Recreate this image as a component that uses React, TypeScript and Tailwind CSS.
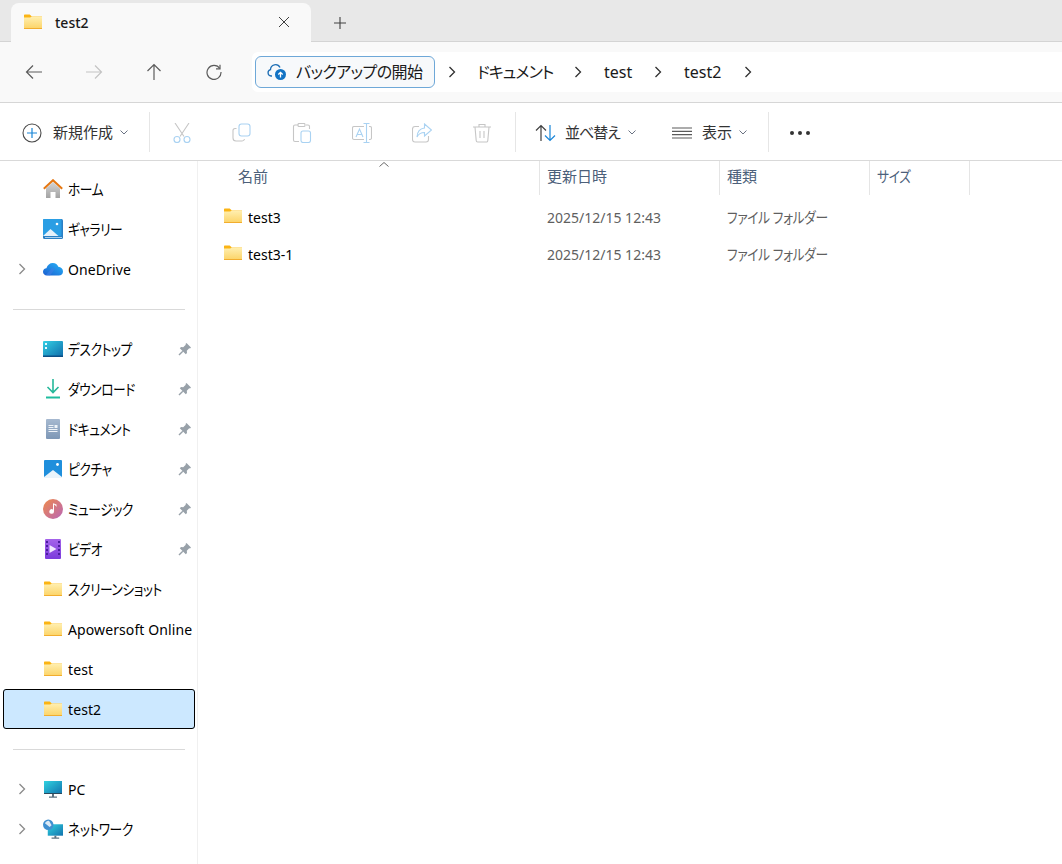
import { ReactNode } from 'react';

function Folder() {
  return (
    <svg width="20" height="16" viewBox="0 0 20 16" className="shrink-0">
      <defs>
        <linearGradient id="folderBody" x1="0" y1="0" x2="0" y2="1">
          <stop offset="0" stopColor="#ffefb0" />
          <stop offset="1" stopColor="#fcd468" />
        </linearGradient>
      </defs>
      <path d="M1 1.2q0-.7.7-.7h5l2.2 2H19v2H1z" fill="#fbb414" />
      <path d="M1 3.6h6.2l1.6-1H19v12H1z" fill="url(#folderBody)" />
      <path d="M1 14h18v1H1z" fill="#f2ad2e" />
    </svg>
  );
}

function Chevron({ className = '' }: { className?: string }) {
  return (
    <svg width="8" height="12" viewBox="0 0 8 12" className={className}>
      <path d="M1.5 1l5 5-5 5" fill="none" stroke="currentColor" strokeWidth="1.3" />
    </svg>
  );
}

function Caret() {
  return (
    <svg width="8" height="5" viewBox="0 0 8 5" className="text-gray-500">
      <path d="M.5.5L4 4 7.5.5" fill="none" stroke="currentColor" strokeWidth="1" />
    </svg>
  );
}

function Pin() {
  return (
    <svg width="14" height="14" viewBox="0 0 14 14">
      <path d="M8.500 1L13 5.500l-1 1-.8-.3-2.400 2.600.2 2.200-1.200 1.200-6-6L3 5l2.200.2 2.600-2.400-.3-.8z" fill="#98a1a9" />
      <path d="M4.800 9.200L1 13" stroke="#98a1a9" strokeWidth="1.400" />
    </svg>
  );
}

const Home = (
  <svg width="20" height="20" viewBox="0 0 20 20">
    <defs>
      <linearGradient id="homeWall" x1="0" y1="0" x2="0" y2="1">
        <stop offset="0" stopColor="#d4d4d4" />
        <stop offset="1" stopColor="#a3a3a3" />
      </linearGradient>
    </defs>
    <path d="M3 9.500L10 3l7 6.500V19h-4.500v-6h-5v6H3z" fill="url(#homeWall)" />
    <path d="M.8 9.800L10 1.200l9.200 8.600" fill="none" stroke="#e57712" strokeWidth="2" />
  </svg>
);

const Gallery = (
  <svg width="20" height="20" viewBox="0 0 20 20">
    <rect x="0" y="0" width="20" height="20" rx="1.500" fill="#2b7fc4" />
    <rect x="0" y="0" width="18.500" height="17" rx="1" fill="#2a9ee4" />
    <circle cx="14" cy="5" r="1.300" fill="#ffffff" />
    <path d="M0 17l7.500-7 8 7z" fill="#e6f1fa" />
    <path d="M2 18h17v1H2z" fill="#a9cfec" />
  </svg>
);

const OneDrive = (
  <svg width="20" height="14" viewBox="0 0 20 14">
    <defs>
      <linearGradient id="oneDrive" x1="0" y1="1" x2="1" y2="0">
        <stop offset="0" stopColor="#1a5fd0" />
        <stop offset="1" stopColor="#27b4f8" />
      </linearGradient>
    </defs>
    <path d="M4 13.500C1.500 13.500 0 11.800 0 9.800 0 7.800 1.500 6.400 3.400 6.200 4.500 3 6.800 1 9.800 1c2.800 0 4.700 1.600 5.500 3.800 2.700.1 4.700 2.100 4.700 4.600 0 2.400-1.800 4.100-4.200 4.100z" fill="url(#oneDrive)" />
    <path d="M3 13L9 6l3 1-5 6.500z" fill="#3f7fe6" opacity="0.6" />
  </svg>
);

const Desktop = (
  <svg width="20" height="16" viewBox="0 0 20 16">
    <defs>
      <linearGradient id="desk" x1="0" y1="0" x2="1" y2="1">
        <stop offset="0" stopColor="#34d0e4" />
        <stop offset="1" stopColor="#0f6cab" />
      </linearGradient>
    </defs>
    <rect width="20" height="16" rx="1" fill="url(#desk)" />
    <rect x="2" y="2" width="2" height="2" fill="#e8fbff" />
    <rect x="2" y="6" width="2" height="2" fill="#e8fbff" />
    <rect x="0" y="14.500" width="20" height="1.500" fill="#0c4f86" />
  </svg>
);

const Download = (
  <svg width="16" height="20" viewBox="0 0 16 20">
    <path d="M8 0v13M2.500 8L8 13.500 13.500 8" fill="none" stroke="#26b89a" strokeWidth="1.600" />
    <path d="M1 18.500h14" stroke="#1fbd9f" strokeWidth="2" />
  </svg>
);

const Documents = (
  <svg width="14" height="20" viewBox="0 0 14 20">
    <defs>
      <linearGradient id="docBody" x1="0" y1="0" x2="0" y2="1">
        <stop offset="0" stopColor="#a6b9d0" />
        <stop offset="1" stopColor="#7d97b6" />
      </linearGradient>
    </defs>
    <rect width="14" height="20" rx="1" fill="url(#docBody)" />
    <path d="M2.500 6.500h5M2.500 8.500h5M2.500 10.500h9M2.500 12.500h9" stroke="#eef3f8" strokeWidth="1" />
    <rect x="8.500" y="6" width="3" height="3" fill="#eef3f8" />
  </svg>
);

const Pictures = (
  <svg width="18" height="18" viewBox="0 0 18 18">
    <rect width="18" height="18" rx="1" fill="#1f8fdc" />
    <circle cx="13.500" cy="4.500" r="1.400" fill="#ffffff" />
    <path d="M0 18v-1l9-7 9 7v1z" fill="#eaf4fb" />
  </svg>
);

const Music = (
  <svg width="20" height="20" viewBox="0 0 20 20">
    <defs>
      <linearGradient id="musicBg" x1="0" y1="0" x2="1" y2="1">
        <stop offset="0" stopColor="#ef8a4a" />
        <stop offset="1" stopColor="#b966b8" />
      </linearGradient>
    </defs>
    <circle cx="10" cy="10" r="10" fill="url(#musicBg)" />
    <path d="M10 4.500h1v8a2.300 2.300 0 1 1-1-1.900z" fill="#ffffff" />
    <path d="M10.500 4.500c.5 1.800 2.500 1.800 3 3.500v-2.500c-1-.5-2-.7-2.500-1z" fill="#ffffff" />
  </svg>
);

const Video = (
  <svg width="16" height="20" viewBox="0 0 16 20">
    <defs>
      <linearGradient id="videoBg" x1="0" y1="0" x2="0" y2="1">
        <stop offset="0" stopColor="#a463ea" />
        <stop offset="1" stopColor="#7b3bdc" />
      </linearGradient>
    </defs>
    <rect width="16" height="20" rx="1" fill="url(#videoBg)" />
    <path d="M4.500 6v8l7-4z" fill="#f0e6ff" />
    <path d="M1 2h2v2H1zM1 6h2v2H1zM1 10h2v2H1zM1 14h2v2H1zM13 2h2v2h-2zM13 6h2v2h-2zM13 10h2v2h-2zM13 14h2v2h-2z" fill="#4b1e9e" />
  </svg>
);

const Pc = (
  <svg width="18" height="17" viewBox="0 0 18 17">
    <defs>
      <linearGradient id="pcScreen" x1="0" y1="0" x2="1" y2="1">
        <stop offset="0" stopColor="#30d2e0" />
        <stop offset="1" stopColor="#1273ae" />
      </linearGradient>
    </defs>
    <rect width="18" height="13" fill="url(#pcScreen)" />
    <path d="M0 12.500h18" stroke="#2b4a5e" strokeWidth="1" />
    <path d="M8 13h2v2.500H8zM5 15.500h8v1.300H5z" fill="#5c7180" />
  </svg>
);

const Network = (
  <svg width="21" height="21" viewBox="0 0 21 21">
    <defs>
      <linearGradient id="netScreen" x1="0" y1="0" x2="1" y2="1">
        <stop offset="0" stopColor="#30d2e0" />
        <stop offset="1" stopColor="#1273ae" />
      </linearGradient>
    </defs>
    <rect x="5" y="5" width="16" height="12" fill="url(#netScreen)" />
    <path d="M12 17h2v2h-2zM9 19h8v1.300H9z" fill="#5c7180" />
    <circle cx="5.500" cy="5.500" r="5.500" fill="#3f8fd0" />
    <path d="M2 4c1-2 3-3 4.500-2.500L9 6 7 8z" fill="#dbe9f5" />
  </svg>
);

function Icon({ name }: { name: 'cut' | 'copy' | 'paste' | 'rename' | 'share' }) {
  const gray = '#c6c6c6';
  const blue = '#a9d2f2';
  if (name === 'cut')
    return (
      <svg width="20" height="20" viewBox="0 0 20 20" fill="none" strokeWidth="1.100">
        <path d="M3 0l9 13.500M17 0L8 13.500" stroke={gray} />
        <circle cx="5" cy="16.500" r="3" stroke={blue} />
        <circle cx="15" cy="16.500" r="3" stroke={blue} />
      </svg>
    );
  if (name === 'copy')
    return (
      <svg width="20" height="20" viewBox="0 0 20 20" fill="none" strokeWidth="1.100">
        <path d="M4.500 5.500H3a2 2 0 0 0-2 2V15a3 3 0 0 0 3 3h6a2.500 2.500 0 0 0 2.500-2" stroke={gray} />
        <rect x="7" y="1" width="11" height="12" rx="2.500" stroke={blue} />
      </svg>
    );
  if (name === 'paste')
    return (
      <svg width="20" height="20" viewBox="0 0 20 20" fill="none" strokeWidth="1.100">
        <path d="M6 2H3a1.500 1.500 0 0 0-1.500 1.500V17A1.500 1.500 0 0 0 3 18.500h4M14 2h2a1.500 1.500 0 0 1 1.500 1.500V6" stroke={gray} />
        <rect x="6" y="0.500" width="7" height="3" rx="1" stroke={gray} />
        <rect x="9" y="8" width="9.500" height="11.500" rx="2" stroke={blue} />
      </svg>
    );
  if (name === 'rename')
    return (
      <svg width="20" height="20" viewBox="0 0 20 20" fill="none" strokeWidth="1.100">
        <path d="M12 3.500H2a1.500 1.500 0 0 0-1.500 1.500v10A1.500 1.500 0 0 0 2 16.500h10M17 3.500h1A1.500 1.500 0 0 1 19.500 5v10a1.500 1.500 0 0 1-1.500 1.500h-1" stroke={gray} />
        <path d="M11.500.5h6M14.500.5v19M11.500 19.500h6" stroke={blue} />
        <path d="M4 14L7.500 6l3.500 8M5.200 11.500h4.600" stroke={blue} />
      </svg>
    );
  return (
    <svg width="20" height="20" viewBox="0 0 20 20" fill="none" strokeWidth="1.100">
      <path d="M7 3.500H3A2.500 2.500 0 0 0 .5 6v10.500A2.500 2.500 0 0 0 3 19h11a2.500 2.500 0 0 0 2.500-2.500V13" stroke={gray} />
      <path d="M12.500 1l7 6-7 6V9.500C9 9.500 6.500 11 5 14c.3-5 3-8.500 7.500-9z" stroke={blue} />
    </svg>
  );
}

function Sep() {
  return <div className="w-px h-10 bg-[#e6e6e6] shrink-0" />;
}

function NavRow({ icon, label, pin, expand, active, kana }: { icon: ReactNode; label: string; pin?: boolean; expand?: boolean; active?: boolean; kana?: boolean }) {
  return (
    <div className={active ? 'h-10 ml-[3px] w-[192px] outline outline-1 -outline-offset-1 outline-black rounded-[3px] bg-[#cce8ff] flex items-center' : 'h-10 ml-[3px] w-[192px] flex items-center'}>
      <div className="w-[15px] ml-[15px] flex items-center text-[#8a8a8a]">{expand && <Chevron />}</div>
      <div className="w-5 ml-[10px] flex items-center justify-center shrink-0">{icon}</div>
      <span className={kana ? "ml-[5px] text-[15px] tracking-[-0.5px] origin-left scale-x-[.85] [font-feature-settings:'palt'] text-black whitespace-nowrap" : 'ml-[5px] text-[14px] tracking-[0.1px] text-black whitespace-nowrap'}>{label}</span>
      {pin && <span className="ml-auto mr-[3px] flex"><Pin /></span>}
    </div>
  );
}

function NavDivider() {
  return (
    <div className="h-10 flex items-center pl-[13px]">
      <div className="w-[172px] h-px bg-[#d9d9d9]" />
    </div>
  );
}

function HeaderCell({ label, width, pad, kana }: { label: string; width: string; pad: string; kana?: boolean }) {
  return (
    <div className={`${width} ${pad} h-[34px] shrink-0 border-r border-[#e5e5e5] flex items-center pb-1 text-[15px] text-[#4c607a]`}>
      <span className={kana ? "[font-feature-settings:'palt'] tracking-[-0.4px] origin-left scale-x-[.85]" : ''}>{label}</span>
    </div>
  );
}

function FileRow({ name }: { name: string }) {
  return (
    <div className="h-[37px] flex items-center text-[14px]">
      <div className="w-[342px] shrink-0 pl-[26px] flex items-center gap-[5px]">
        <span className="flex -mt-[3px] -ml-px"><Folder /></span>
        <span className="text-black">{name}</span>
      </div>
      <div className="w-[180px] shrink-0 pl-[7px] text-[#5f5f5f]">2025/12/15 12:43</div>
      <div className="w-[150px] shrink-0 pl-[7px] text-[#5f5f5f] text-[15px]">
        <div className="tracking-[-0.4px] origin-left scale-x-[.85] [font-feature-settings:'palt'] whitespace-nowrap">ファイル フォルダー</div>
      </div>
    </div>
  );
}

export default function App() {
  return (
    <div className="w-[1062px] h-[864px] overflow-hidden flex flex-col bg-white font-['Noto_Sans','Noto_Sans_CJK_JP',sans-serif]">
      {/* tabs */}
      <div className="h-[42px] shrink-0 bg-[#e8e8e8] flex items-end pl-[11px] border-b border-[#d4d4d4]">
        <div className="w-[300px] h-[39px] -mb-px bg-[#f9f9f9] rounded-t-lg flex items-center pl-[12px] pb-[1px]">
          <Folder />
          <span className="ml-[12px] text-[14px] font-medium text-[#1a1a1a]">test2</span>
          <svg width="12" height="12" viewBox="0 0 12 12" className="ml-auto mr-[21px] text-[#404040]">
            <path d="M1 1l10 10M11 1L1 11" stroke="currentColor" strokeWidth="1" />
          </svg>
        </div>
        <div className="h-[39px] flex items-center pt-[2px] ml-[23px] text-[#404040]">
          <svg width="12" height="12" viewBox="0 0 12 12">
            <path d="M6 0v12M0 6h12" stroke="currentColor" strokeWidth="1.100" />
          </svg>
        </div>
      </div>

      {/* address bar */}
      <div className="h-[61px] shrink-0 bg-[#f9f9f9] border-b border-[#d6d6d6] flex items-center pl-[4px]">
        <div className="w-[60px] flex justify-center text-[#5c5c5c]">
          <svg width="18" height="16" viewBox="0 0 18 16" fill="none" stroke="currentColor" strokeWidth="1.200">
            <path d="M17 8H1.500M8 1.500L1.500 8 8 14.500" />
          </svg>
        </div>
        <div className="w-[60px] flex justify-center text-[#c4c4c4]">
          <svg width="18" height="16" viewBox="0 0 18 16" fill="none" stroke="currentColor" strokeWidth="1.200">
            <path d="M1 8h15.500M10 1.500L16.500 8 10 14.500" />
          </svg>
        </div>
        <div className="w-[60px] flex justify-center text-[#5c5c5c]">
          <svg width="16" height="18" viewBox="0 0 16 18" fill="none" stroke="currentColor" strokeWidth="1.200">
            <path d="M8 17V1.500M1.500 8L8 1.500 14.500 8" />
          </svg>
        </div>
        <div className="w-[60px] flex justify-center text-[#5c5c5c]">
          <svg width="16" height="16" viewBox="0 0 16 16" fill="none" stroke="currentColor" strokeWidth="1.200">
            <path d="M13.800 4.500A7 7 0 1 0 15 8" />
            <path d="M14 .8v4h-4" />
          </svg>
        </div>
        <div className="ml-[8px] flex-1 h-10 bg-white rounded-l-md flex items-center pl-[3px] text-[#1a1a1a]">
          <div className="w-[180px] h-8 shrink-0 rounded-md border border-[#6ea8d8] bg-[#f7f9fb] flex items-center pl-[11px]">
            <svg width="20" height="18" viewBox="0 0 20 18" fill="none">
              <path d="M5 13H4a3.200 3.200 0 0 1-.5-6.300A5 5 0 0 1 13 4.500" stroke="#1f6fb5" strokeWidth="1.300" />
              <circle cx="13.500" cy="11.500" r="5.500" fill="#1273c4" />
              <path d="M13.500 14.500v-5M11.300 11.500l2.200-2.200 2.200 2.200" stroke="#ffffff" strokeWidth="1.300" />
            </svg>
            <span className="ml-[9px] text-[16px] tracking-[-0.6px] [font-feature-settings:'palt'] whitespace-nowrap">バックアップの開始</span>
          </div>
          <Chevron className="ml-[13px] text-[#303030]" />
          <span className="ml-[21px] w-[76px] text-[16px] tracking-[-0.9px] [font-feature-settings:'palt'] whitespace-nowrap">ドキュメント</span>
          <Chevron className="ml-[21px] text-[#303030]" />
          <span className="ml-[22px] w-[29px] text-[16px]">test</span>
          <Chevron className="ml-[21px] text-[#303030]" />
          <span className="ml-[22px] w-[38px] text-[16px]">test2</span>
          <Chevron className="ml-[22px] text-[#303030]" />
        </div>
      </div>

      {/* toolbar */}
      <div className="h-[58px] shrink-0 bg-white border-b border-[#d9d9d9] flex items-center">
        <div className="w-[149px] shrink-0 pl-[22px] flex items-center pt-[2px]">
          <svg width="20" height="20" viewBox="0 0 20 20" fill="none">
            <circle cx="10" cy="10" r="9" stroke="#4a4a4a" strokeWidth="1.100" />
            <path d="M10 5v10M5 10h10" stroke="#1a86d8" strokeWidth="1.200" />
          </svg>
          <span className="ml-[11px] w-[60px] text-[15px] text-[#333333] whitespace-nowrap">新規作成</span>
          <span className="ml-[7px] flex"><Caret /></span>
        </div>
        <Sep />
        <div className="w-[2px] shrink-0" />
        {(['cut', 'copy', 'paste', 'rename', 'share'] as const).map((n) => (
          <div key={n} className="w-[60px] shrink-0 flex justify-center pt-[2px]"><Icon name={n} /></div>
        ))}
        <div className="w-[60px] shrink-0 flex justify-center pt-[2px]">
          <svg width="20" height="20" viewBox="0 0 20 20" fill="none" stroke="#c6c6c6" strokeWidth="1.100">
            <path d="M1 4h18M7 4V1.500h6V4M3 4l1.200 13.500a1.500 1.500 0 0 0 1.500 1.500h8.600a1.500 1.500 0 0 0 1.500-1.500L17 4M8 8v7M12 8v7" />
          </svg>
        </div>
        <div className="w-[3px] shrink-0" />
        <Sep />
        <div className="ml-[19px] flex items-center pt-[2px]">
          <svg width="21" height="18" viewBox="0 0 21 18" fill="none" strokeWidth="1.200">
            <path d="M6 17V1.500M1 6.500l5-5 5 5" stroke="#404040" />
            <path d="M15 1v15.500M10 11.500l5 5 5-5" stroke="#1a86d8" />
          </svg>
          <span className="ml-[9px] w-[56px] text-[15px] tracking-[-1px] [font-feature-settings:'palt'] text-[#333333] whitespace-nowrap">並べ替え</span>
          <span className="ml-[7px] flex"><Caret /></span>
          <svg width="20" height="12" viewBox="0 0 20 12" fill="none" stroke="#5a5a5a" strokeWidth="1.200" className="ml-[36px]">
            <path d="M0 1h20M0 4.300h20M0 7.700h20M0 11h20" />
          </svg>
          <span className="ml-[10px] w-[30px] text-[15px] text-[#333333]">表示</span>
          <span className="ml-[7px] flex"><Caret /></span>
        </div>
        <div className="ml-[21px]"><Sep /></div>
        <div className="ml-[21px] flex gap-[4px] pt-[2px]">
          <div className="w-[4px] h-[4px] rounded-full bg-[#333333]" />
          <div className="w-[4px] h-[4px] rounded-full bg-[#333333]" />
          <div className="w-[4px] h-[4px] rounded-full bg-[#333333]" />
        </div>
      </div>

      {/* body */}
      <div className="flex-1 flex min-h-0">
        <div className="w-[198px] shrink-0 border-r border-[#f0f0f0] pt-2">
          <NavRow icon={Home} label="ホーム" kana />
          <NavRow icon={Gallery} label="ギャラリー" kana />
          <NavRow icon={OneDrive} label="OneDrive" expand />
          <NavDivider />
          <NavRow icon={Desktop} label="デスクトップ" pin kana />
          <NavRow icon={Download} label="ダウンロード" pin kana />
          <NavRow icon={Documents} label="ドキュメント" pin kana />
          <NavRow icon={Pictures} label="ピクチャ" pin kana />
          <NavRow icon={Music} label="ミュージック" pin kana />
          <NavRow icon={Video} label="ビデオ" pin kana />
          <NavRow icon={<Folder />} label="スクリーンショット" kana />
          <NavRow icon={<Folder />} label="Apowersoft Online" />
          <NavRow icon={<Folder />} label="test" />
          <NavRow icon={<Folder />} label="test2" active />
          <NavDivider />
          <NavRow icon={Pc} label="PC" expand />
          <NavRow icon={Network} label="ネットワーク" expand kana />
        </div>
        <div className="flex-1 min-w-0">
          <div className="relative flex">
            <HeaderCell label="名前" width="w-[342px]" pad="pl-[40px]" />
            <HeaderCell label="更新日時" width="w-[180px]" pad="pl-[7px]" />
            <HeaderCell label="種類" width="w-[150px]" pad="pl-[7px]" />
            <HeaderCell label="サイズ" width="w-[100px]" pad="pl-[7px]" kana />
            <svg width="10" height="5" viewBox="0 0 10 5" className="absolute left-[181px] top-[1px] text-[#6a6a6a]">
              <path d="M.5 4.500L5 .5l4.500 4" fill="none" stroke="currentColor" strokeWidth="1" />
            </svg>
          </div>
          <div className="pt-[4px]">
            <FileRow name="test3" />
            <FileRow name="test3-1" />
          </div>
        </div>
      </div>
    </div>
  );
}
